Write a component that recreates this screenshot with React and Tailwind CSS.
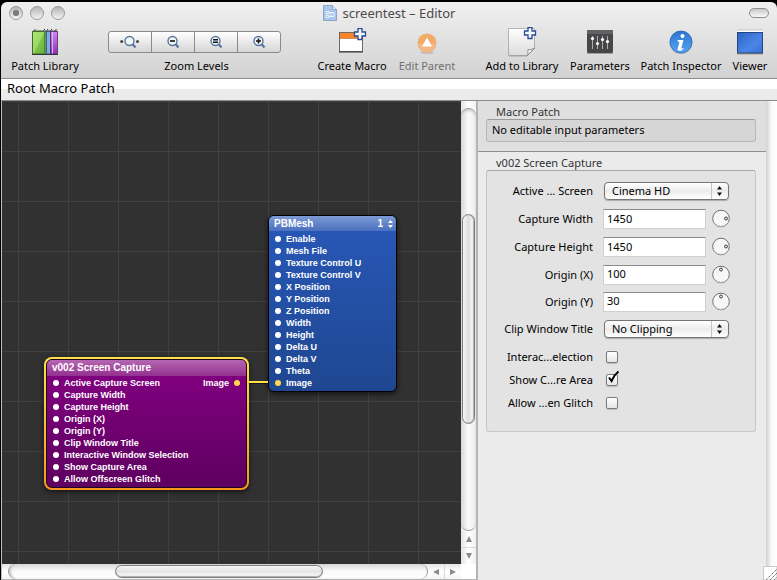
import { useState } from 'react'

const purplePorts = [
  'Active Capture Screen',
  'Capture Width',
  'Capture Height',
  'Origin (X)',
  'Origin (Y)',
  'Clip Window Title',
  'Interactive Window Selection',
  'Show Capture Area',
  'Allow Offscreen Glitch',
]

const meshPorts = [
  'Enable',
  'Mesh File',
  'Texture Control U',
  'Texture Control V',
  'X Position',
  'Y Position',
  'Z Position',
  'Width',
  'Height',
  'Delta U',
  'Delta V',
  'Theta',
  'Image',
]

function PlusShape({ x, y }) {
  return (
    <path
      transform={`translate(${x} ${y})`}
      d="M4 .5h4V4h3.500v4H8v3.500H4V8H.5V4H4z"
      fill="#f4f8ff"
      stroke="#2c4b8e"
      strokeWidth="1.300"
    />
  )
}

function LibraryIcon() {
  return (
    <svg width="28" height="28" viewBox="0 0 28 28">
      <defs>
        <linearGradient id="bookGreen" x1="0" y1="0" x2="1" y2="1">
          <stop offset="0" stopColor="#b2e57c" />
          <stop offset=".5" stopColor="#9bd862" />
          <stop offset=".56" stopColor="#7cc24a" />
          <stop offset="1" stopColor="#69b03c" />
        </linearGradient>
        <linearGradient id="bookPurple" x1="0" y1="0" x2="0" y2="1">
          <stop offset="0" stopColor="#cf86ee" />
          <stop offset="1" stopColor="#8a35b4" />
        </linearGradient>
      </defs>
      <path d="M2 2.500h24v1.500H2z" fill="#4a5a44" />
      <path d="M3 2.500l1.500-1M12.500 2.500l1.500-1.500M16 2.500l1-1.500M19.500 2.500l1.500-1.500M24 2.500l1.500-1" stroke="#333" />
      <rect x="1.500" y="3.500" width="12" height="22.500" fill="url(#bookGreen)" stroke="#466a2c" />
      <rect x="13.500" y="3.500" width="2" height="22.500" fill="#5e9a4c" />
      <rect x="15.500" y="3.500" width="4" height="22.500" fill="#7daee0" stroke="#2d4f80" strokeWidth=".8" />
      <rect x="19.500" y="3.500" width="7" height="22.500" fill="url(#bookPurple)" stroke="#57246f" strokeWidth=".8" />
      <path d="M21.500 4v21.500" stroke="#e3b4f5" />
      <path d="M1 26.500h26" stroke="#333" />
    </svg>
  )
}

function MacroIcon() {
  return (
    <svg width="30" height="28" viewBox="0 0 30 28">
      <rect x="2.500" y="4.500" width="23" height="19" fill="#fff" stroke="#6a6a6a" />
      <rect x="3" y="5" width="22" height="5" fill="#f98426" />
      <path d="M3 10.500h22" stroke="#b85a14" strokeWidth=".7" />
      <path d="M2 24h24" stroke="#333" />
      <PlusShape x={17} y={0} />
    </svg>
  )
}

function ParentIcon() {
  return (
    <svg width="22" height="28" viewBox="0 0 22 28">
      <ellipse cx="11" cy="24.500" rx="7" ry="1.500" fill="#bdbdbd" />
      <circle cx="11" cy="15" r="9.500" fill="#f2ab68" />
      <path d="M2 15.500a9 9 0 0 0 18 0z" fill="#f3b883" />
      <path d="M11 9.500l5 9H6z" fill="#fff" />
    </svg>
  )
}

function PageIcon() {
  return (
    <svg width="30" height="30" viewBox="0 0 30 30">
      <defs>
        <linearGradient id="page" x1="0" y1="0" x2="0" y2="1">
          <stop offset="0" stopColor="#fff" />
          <stop offset="1" stopColor="#dcdcdc" />
        </linearGradient>
      </defs>
      <path d="M1.500 1.500h26v20l-7 7h-19z" fill="url(#page)" stroke="#a5a5a5" strokeWidth=".8" />
      <path d="M20.500 28.500c1-3 0-5 .5-6 2 .5 4 0 6.500-1.500z" fill="#fafafa" stroke="#777" strokeWidth=".8" />
      <path d="M2 29h18" stroke="#888" strokeWidth=".6" />
      <PlusShape x={17} y={0} />
    </svg>
  )
}

function SlidersIcon() {
  return (
    <svg width="26" height="26" viewBox="0 0 26 26">
      <rect y="1" width="26" height="23" rx="1.500" fill="#47474a" />
      <rect y="1" width="26" height="4" rx="1" fill="#626266" />
      <path d="M0 24.500h26" stroke="#777" strokeWidth=".6" />
      <path d="M5.500 7v13M10.500 7v13M15.500 7v13M20.500 7v13" stroke="#c9c9c9" strokeWidth=".8" />
      <circle cx="5.500" cy="9.500" r="1.600" fill="#fff" />
      <circle cx="10.500" cy="14.500" r="1.600" fill="#fff" />
      <circle cx="15.500" cy="10.500" r="1.600" fill="#fff" />
      <circle cx="20.500" cy="12.500" r="1.600" fill="#fff" />
    </svg>
  )
}

function InfoIcon() {
  return (
    <svg width="24" height="26" viewBox="0 0 24 26">
      <defs>
        <linearGradient id="info" x1="0" y1="0" x2="0" y2="1">
          <stop offset="0" stopColor="#2f74d0" />
          <stop offset="1" stopColor="#55a5f2" />
        </linearGradient>
      </defs>
      <circle cx="12" cy="13.500" r="11.500" fill="#b9b9b9" />
      <circle cx="12" cy="13" r="11" fill="url(#info)" stroke="#2a68bd" strokeWidth=".8" />
      <circle cx="13.500" cy="7" r="2" fill="#fff" />
      <path d="M8.500 11h6l-2.200 8q0 1 2 0l.3.900q-2 1.900-4.300 1.900-2.300-.2-1.600-2.600l1.600-5.500q0-1.300-1.800-1.500z" fill="#fff" />
    </svg>
  )
}

function ViewerIcon() {
  return (
    <svg width="28" height="26" viewBox="0 0 28 26">
      <defs>
        <linearGradient id="viewer" x1="0" y1="0" x2="1" y2="1">
          <stop offset="0" stopColor="#2d62c4" />
          <stop offset=".6" stopColor="#4a86e6" />
          <stop offset="1" stopColor="#356fd6" />
        </linearGradient>
      </defs>
      <rect x="1" y="1" width="26" height="3" fill="#fff" />
      <path d="M1 1h26" stroke="#bbb" strokeWidth=".8" />
      <rect x="1.500" y="3.500" width="25" height="20.500" fill="url(#viewer)" stroke="#24457f" />
      <path d="M1 24.800h26" stroke="#555" strokeWidth=".8" />
    </svg>
  )
}

function ZoomGlyph({ kind }) {
  return (
    <svg width="20" height="14" viewBox="0 0 20 14">
      <circle cx="9.500" cy="6" r="4.500" fill="#f3f6fa" stroke="#56779f" strokeWidth="1.400" />
      <path d="M12.500 9l3 3.500" stroke="#56779f" strokeWidth="2.200" />
      {kind === 'fit' && (
        <>
          <circle cx="1.700" cy="6.500" r="1.500" fill="#444" />
          <circle cx="17.500" cy="6.500" r="1.500" fill="#444" />
        </>
      )}
      {kind === 'out' && <path d="M7 6h5" stroke="#111" strokeWidth="1.600" />}
      {kind === 'actual' && <path d="M7 4.700h5M7 7.300h5" stroke="#111" strokeWidth="1.400" />}
      {kind === 'in' && <path d="M7 6h5M9.500 3.500v5" stroke="#111" strokeWidth="1.600" />}
    </svg>
  )
}

function ToolButton({ icon, label, width, disabled = false }) {
  return (
    <button disabled={disabled} className={`flex shrink-0 flex-col items-center ${width}`}>
      <span className="flex h-8 items-center">{icon}</span>
      <span className={`text-[11px] leading-4 whitespace-nowrap ${disabled ? 'text-[#707070]' : 'text-black'}`}>
        {label}
      </span>
    </button>
  )
}

function Toolbar() {
  return (
    <div className="flex justify-between px-[9px] pt-0.5">
      <ToolButton icon={<LibraryIcon />} label="Patch Library" width="w-[70px]" />
      <div className="flex w-[173px] shrink-0 flex-col">
        <div className="flex h-8 items-center">
          <div className="flex h-[22px] w-full divide-x divide-[#8b8b8b] rounded-[3px] border border-[#8b8b8b] bg-linear-to-b from-white to-[#d6d6d6]">
            {['fit', 'out', 'actual', 'in'].map((kind) => (
              <button key={kind} aria-label={`Zoom ${kind}`} className="flex flex-1 items-center justify-center">
                <ZoomGlyph kind={kind} />
              </button>
            ))}
          </div>
        </div>
        <span className="pl-1 text-center text-[11px] leading-4">Zoom Levels</span>
      </div>
      <div className="flex gap-[11px] pl-2">
        <ToolButton icon={<MacroIcon />} label="Create Macro" width="w-[70px]" />
        <ToolButton icon={<ParentIcon />} label="Edit Parent" width="w-[58px]" disabled />
      </div>
      <div className="flex gap-2.5">
        <ToolButton icon={<PageIcon />} label="Add to Library" width="w-[76px]" />
        <ToolButton icon={<SlidersIcon />} label="Parameters" width="w-[60px]" />
        <ToolButton icon={<InfoIcon />} label="Patch Inspector" width="w-[82px]" />
        <ToolButton icon={<ViewerIcon />} label="Viewer" width="w-[36px]" />
      </div>
    </div>
  )
}

function WindowLight({ label, dot = false }) {
  return (
    <button
      aria-label={label}
      className="flex size-3.5 items-center justify-center rounded-full border border-[#9a9a9a] bg-linear-to-b from-[#b5b5b5] to-[#f4f4f4]"
    >
      {dot && <span className="size-1.5 rounded-full bg-[#777]" />}
    </button>
  )
}

function TitleBar() {
  return (
    <div className="grid h-[22px] grid-cols-[1fr_auto_1fr] items-center px-2">
      <div className="flex gap-[7px]">
        <WindowLight label="Close" dot />
        <WindowLight label="Minimize" />
        <WindowLight label="Zoom" />
      </div>
      <div className="flex items-center gap-1.5 text-[13px] leading-4 text-[#4a4a4a]">
        <svg width="14" height="16" viewBox="0 0 14 16">
          <path d="M.5.5h9l4 4v11H.5z" fill="#a9c5ec" stroke="#8ba4c8" />
          <path d="M9.500.5v4h4" fill="#e3edfa" stroke="#8ba4c8" />
          <path d="M3 6.500h3v2H3zM3 10.500h3v2H3zM8 7.500h3v4H8zM6 7.500h2M6 11.500h2" fill="none" stroke="#e9f1fc" />
        </svg>
        <h1>screentest – Editor</h1>
      </div>
      <button
        aria-label="Toggle toolbar"
        className="h-2.5 w-5 justify-self-end rounded-full border border-[#8d8d8d] bg-linear-to-b from-[#c9c9c9] to-[#f8f8f8]"
      />
    </div>
  )
}

function Port({ label, connected = false }) {
  return (
    <li className="flex h-3 items-center gap-[5px]">
      <span className={`size-1.5 rounded-full ${connected ? 'bg-[#ffd850]' : 'bg-white'}`} />
      {label}
    </li>
  )
}

function ScreenCaptureNode() {
  return (
    <div className="absolute top-[256px] left-[42px] w-[205px] rounded-lg bg-linear-to-b from-[#ffe14a] to-[#f7941d] p-0.5 shadow-[0_2px_5px_rgba(0,0,0,0.6)]">
      <div className="overflow-hidden rounded-md border border-[#1c0520] bg-linear-to-b from-[#850083] to-[#5e0060] font-['Liberation_Sans',Arial,sans-serif] font-bold text-white">
        <h2 className="h-4 bg-linear-to-b from-[#b566b3] to-[#93308f] pl-[5px] text-[10px] leading-[16px]">
          v002 Screen Capture
        </h2>
        <div className="flex justify-between pt-px pr-1.5 pb-0.5 pl-1.5 text-[9px] leading-3">
          <ul>
            {purplePorts.map((port) => (
              <Port key={port} label={port} />
            ))}
          </ul>
          <div className="flex h-3 items-center gap-[5px]">
            Image
            <span className="size-1.5 rounded-full bg-[#ffd850]" />
          </div>
        </div>
      </div>
    </div>
  )
}

function MeshNode() {
  return (
    <div className="absolute top-[114px] left-[266px] w-[129px] overflow-hidden rounded-md border border-black bg-linear-to-b from-[#2858b8] to-[#1f4791] font-['Liberation_Sans',Arial,sans-serif] font-bold text-white shadow-[0_2px_5px_rgba(0,0,0,0.6)]">
      <div className="flex h-[15px] items-center justify-between bg-linear-to-b from-[#7d9ad6] to-[#4a70be] pr-0.5 pl-[5px] text-[10px] leading-[15px]">
        <h2>PBMesh</h2>
        <button className="flex items-center gap-1">
          1
          <svg width="7" height="8" viewBox="0 0 7 8" fill="#fff">
            <path d="M3.500 0L6 3H1zM3.500 8L1 5h5z" />
          </svg>
        </button>
      </div>
      <ul className="pt-0.5 pb-0.5 pl-1.5 text-[9px] leading-3">
        {meshPorts.map((port) => (
          <Port key={port} label={port} connected={port === 'Image'} />
        ))}
      </ul>
    </div>
  )
}

function Canvas() {
  return (
    <div className="relative min-w-0 flex-1 overflow-hidden bg-[#313131] bg-[linear-gradient(to_right,#404040_1px,transparent_1px),linear-gradient(to_bottom,#404040_1px,transparent_1px)] bg-size-[50px_50px] bg-position-[16px_0]">
      <ScreenCaptureNode />
      <MeshNode />
      <div className="absolute top-[280px] left-[247px] h-0.5 w-[19px] bg-[#ffe14a] shadow-[0_1px_1px_rgba(0,0,0,0.6)]" />
    </div>
  )
}

function ArrowButton({ label, d }) {
  return (
    <button aria-label={label} className="flex size-4 items-center justify-center">
      <svg width="8" height="8" viewBox="0 0 8 8" fill="#8a8a8a">
        <path d={d} />
      </svg>
    </button>
  )
}

function VerticalScrollbar() {
  return (
    <div className="flex w-[15px] flex-col items-center bg-linear-to-r from-[#e4e4e4] via-white to-[#f0f0f0]">
      <div className="w-full flex-1 pt-[7px]">
        <div className="flex h-full flex-col rounded-full border-y border-[#9a9a9a] bg-linear-to-r from-[#d9d9d9] via-[#fafafa] to-[#ececec] shadow-[inset_0_2px_2px_#ccc]">
          <div className="basis-[105px]" />
          <div className="mx-px basis-[210px] rounded-full border border-[#7d7d7d] bg-linear-to-r from-[#f5f5f5] via-[#dedede] to-white shadow-[inset_-1px_0_1px_#aaa]" />
        </div>
      </div>
      <ArrowButton label="Scroll up" d="M4 1l3 6H1z" />
      <div className="h-px w-full bg-[#d8d8d8]" />
      <ArrowButton label="Scroll down" d="M4 7l3-6H1z" />
    </div>
  )
}

function HorizontalScrollbar() {
  return (
    <div className="flex h-[15px] items-center bg-linear-to-b from-[#e4e4e4] via-white to-[#f4f4f4]">
      <div className="h-full flex-1 pl-1.5">
        <div className="flex h-full rounded-full border-x border-[#9a9a9a] bg-linear-to-b from-[#d9d9d9] via-[#fafafa] to-white shadow-[inset_2px_0_2px_#ccc]">
          <div className="basis-[106px]" />
          <div className="my-px basis-[208px] rounded-full border border-[#7d7d7d] bg-linear-to-b from-[#f5f5f5] via-[#e4e4e4] to-white shadow-[inset_0_-1px_1px_#aaa]" />
        </div>
      </div>
      <ArrowButton label="Scroll left" d="M1 4l6-3v6z" />
      <div className="h-full w-px bg-[#d8d8d8]" />
      <ArrowButton label="Scroll right" d="M7 4L1 1v6z" />
      <div className="h-full w-[15px] bg-white" />
    </div>
  )
}

function Row({ id, label, height = 'h-7', children }) {
  return (
    <div className={`flex items-center ${height}`}>
      <label htmlFor={id} className="w-[106px] text-right whitespace-nowrap">
        {label}
      </label>
      {children}
    </div>
  )
}

function SelectRow({ id, label, height, options }) {
  return (
    <Row id={id} label={label} height={height}>
      <div className="relative ml-[11px]">
        <select
          id={id}
          className="block h-[18px] w-[125px] appearance-none rounded-sm border border-[#757575] bg-linear-to-b from-white via-[#ececec] to-white pl-[7px] leading-4 shadow-[0_1px_1px_#aaa]"
        >
          {options.map((option) => (
            <option key={option}>{option}</option>
          ))}
        </select>
        <svg className="pointer-events-none absolute top-px right-px h-4 w-[17px]" viewBox="0 0 17 16" fill="#111">
          <path d="M.5 0v16" stroke="#c4c4c4" />
          <path d="M8.500 3L11 6.500H6zM8.500 13L6 9.500h5z" />
        </svg>
      </div>
    </Row>
  )
}

function NumberRow({ id, label, height, value, knob }) {
  const [text, setText] = useState(value)

  return (
    <Row id={id} label={label} height={height}>
      <input
        id={id}
        value={text}
        onChange={(e) => setText(e.target.value)}
        className="ml-2.5 h-5 w-[103px] border border-[#cfcfcf] border-t-[#8a8a8a] bg-white pb-0.5 pl-[3px] leading-4"
      />
      <svg className="ml-1.5 shrink-0" width="18" height="20" viewBox="0 0 18 20">
        <circle cx="9" cy="9.500" r="8.300" fill="#f7f7f7" stroke="#707070" />
        <path d="M2 13a8 8 0 0 0 14 0" fill="none" stroke="#d5d5d5" />
        {knob === 'right' ? (
          <circle cx="14" cy="9.500" r="1.500" fill="#ddd" stroke="#444" />
        ) : (
          <circle cx="9" cy="4.500" r="1.500" fill="#ddd" stroke="#444" />
        )}
      </svg>
    </Row>
  )
}

function CheckRow({ id, label, defaultChecked = false }) {
  const [checked, setChecked] = useState(defaultChecked)

  return (
    <Row id={id} label={label} height="h-[23px]">
      <div className="relative ml-[13px]">
        <input
          id={id}
          type="checkbox"
          checked={checked}
          onChange={(e) => setChecked(e.target.checked)}
          className="block size-3 appearance-none rounded-xs border border-[#7a7a7a] bg-linear-to-b from-white to-[#e6e6e6] shadow-[0_1px_1px_#bbb]"
        />
        {checked && (
          <svg className="pointer-events-none absolute -top-1 left-0" width="14" height="14" viewBox="0 0 14 14">
            <path d="M3 7.500L5.500 11Q8 5 12.500 1.500" fill="none" stroke="#000" strokeWidth="2" />
          </svg>
        )}
      </div>
    </Row>
  )
}

function Inspector() {
  return (
    <aside className="w-[288px] shrink-0 bg-[#ebebeb] text-[11px] leading-4">
      <section className="border-b border-[#8f8f8f] bg-[#dfdfdf] pt-[3px] pr-2.5 pb-[9px] pl-2">
        <h2 className="pl-2.5 leading-[15px] text-[#333]">Macro Patch</h2>
        <p className="h-[23px] rounded-[3px] border border-[#b8b8b8] border-t-[#9a9a9a] bg-[#d6d6d6] pl-[5px] leading-[20px]">
          No editable input parameters
        </p>
      </section>
      <section className="pt-[3px] pr-2.5 pl-2">
        <h2 className="pl-2.5 leading-[15px] text-[#333]">v002 Screen Capture</h2>
        <div className="rounded-[3px] border border-[#c6c6c6] border-t-[#a8a8a8] bg-[#e3e3e3] pt-1.5 pb-[17px]">
          <SelectRow id="screen" label="Active ... Screen" options={['Cinema HD']} />
          <NumberRow id="width" label="Capture Width" value="1450" knob="right" />
          <NumberRow id="height" label="Capture Height" value="1450" knob="right" />
          <NumberRow id="originX" label="Origin (X)" height="h-[27px]" value="100" knob="top" />
          <NumberRow id="originY" label="Origin (Y)" height="h-[27px]" value="30" knob="top" />
          <SelectRow id="clip" label="Clip Window Title" height="h-[27px]" options={['No Clipping']} />
          <div className="pt-[3px]">
            <CheckRow id="interactive" label="Interac...election" />
            <CheckRow id="showArea" label="Show C...re Area" defaultChecked />
            <CheckRow id="glitch" label="Allow ...en Glitch" />
          </div>
        </div>
      </section>
    </aside>
  )
}

function ResizeStrip() {
  return (
    <div className="relative w-[11px] shrink-0 bg-linear-to-r from-[#d2d2d2] via-[#fafafa] to-white">
      <svg className="absolute right-0 bottom-0" width="14" height="14" viewBox="0 0 14 14">
        <path d="M.5 14V.5H14V14z" fill="#fff" stroke="#c9c9c9" />
        <path d="M3 14L14 3M7 14l7-7M11 14l3-3" stroke="#777" strokeDasharray="1.500 .6" />
      </svg>
    </div>
  )
}

function App() {
  return (
    <div className="flex h-screen flex-col bg-black pt-0.5 pl-px font-['Noto_Sans','Open_Sans',sans-serif] text-black">
      <header className="h-[77px] shrink-0 rounded-t-md border-b border-[#8c8c8c] bg-linear-to-b from-[#f0f0f0] to-[#d2d2d2] pb-px">
        <TitleBar />
        <Toolbar />
      </header>
      <nav className="h-[22px] shrink-0 border-b border-[#8c8c8c] bg-linear-to-b from-white from-45% to-[#ebebeb] to-50% pl-1.5 text-[13px] leading-[19px]">
        Root Macro Patch
      </nav>
      <main className="flex min-h-0 flex-1 bg-[#bdbdbd] pl-px">
        <div className="flex min-w-0 flex-1 flex-col border-r-2 border-b border-[#b4b4b4]">
          <div className="flex min-h-0 flex-1">
            <Canvas />
            <VerticalScrollbar />
          </div>
          <HorizontalScrollbar />
        </div>
        <Inspector />
        <ResizeStrip />
      </main>
    </div>
  )
}

export default App
